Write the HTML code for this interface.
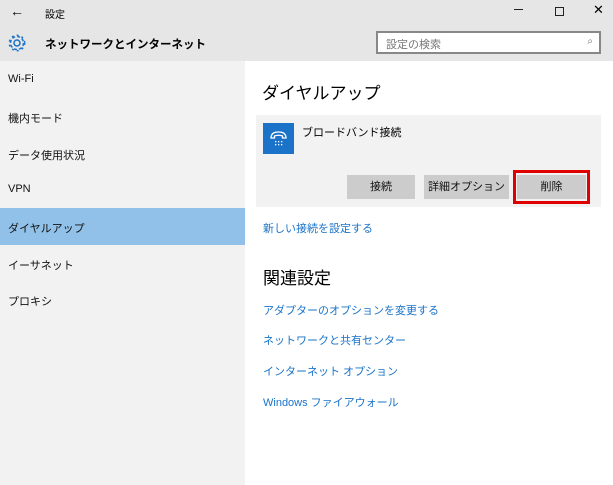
<!DOCTYPE html>
<html><head><meta charset="utf-8"><style>
*{margin:0;padding:0;box-sizing:border-box}
body{width:613px;height:485px;overflow:hidden;background:#fff;font-family:"Liberation Sans","Noto Sans CJK JP",sans-serif;color:#000;position:relative}
.a{position:absolute}
.top{left:0;top:0;width:613px;height:61px;background:#e6e6e6}
.nav{left:0;top:61px;width:245px;height:424px;background:#f2f2f2}
.ni{position:absolute;left:8px;font-size:11px;color:#111}
.sel{left:0;top:208px;width:245px;height:37px;background:#91c1e8}
.lnk{position:absolute;left:263px;font-size:11px;color:#1a73c9}
.btn{position:absolute;top:175px;height:24px;background:#cccccc;font-size:11px;text-align:center;line-height:24px;color:#111}
</style></head><body>
<div class="a top"></div>
<div class="a" style="left:10px;top:3px;font-size:14px">←</div>
<div class="a" style="left:45px;top:6px;font-size:10px">設定</div>
<div class="a" style="left:514px;top:9px;width:9px;height:1px;background:#222"></div>
<div class="a" style="left:555px;top:7px;width:9px;height:9px;border:1px solid #222"></div>
<div class="a" style="left:593px;top:2px;font-size:13px">✕</div>
<svg class="a" style="left:7px;top:33px" width="20" height="20" viewBox="0 0 20 20"><circle cx="10" cy="10" r="3" fill="none" stroke="#1a73c9" stroke-width="1.5"/><circle cx="10" cy="10" r="6.5" fill="none" stroke="#1a73c9" stroke-width="1.5" stroke-dasharray="3 2.1"/><circle cx="10" cy="10" r="7.7" fill="none" stroke="#1a73c9" stroke-width="1.5" stroke-dasharray="2 3.1"/></svg>
<div class="a" style="left:45px;top:36px;font-size:11.5px;font-weight:bold">ネットワークとインターネット</div>
<div class="a" style="left:376px;top:31px;width:225px;height:23px;border:2px solid #888;background:#fff;font-size:11px;color:#777;padding:3px 0 0 8px">設定の検索<span style="position:absolute;right:6px;top:3px;font-size:10px">⌕</span></div>
<div class="a nav"></div>
<div class="a sel"></div>
<div class="ni" style="top:73px">Wi-Fi</div>
<div class="ni" style="top:110px">機内モード</div>
<div class="ni" style="top:147px">データ使用状況</div>
<div class="ni" style="top:183px">VPN</div>
<div class="ni" style="top:220px">ダイヤルアップ</div>
<div class="ni" style="top:257px">イーサネット</div>
<div class="ni" style="top:293px">プロキシ</div>
<div class="a" style="left:262px;top:79px;font-size:17px">ダイヤルアップ</div>
<div class="a" style="left:256px;top:115px;width:345px;height:92px;background:#f2f2f2"></div>
<div class="a" style="left:263px;top:123px;width:31px;height:31px;background:#1a73c9"></div>
<svg class="a" style="left:263px;top:123px" width="31" height="31" viewBox="0 0 31 31"><path d="M8 15 Q8 9 15.5 9 Q23 9 23 15 L19.5 15 L19.5 13 Q15.5 11.5 11.5 13 L11.5 15 Z" fill="none" stroke="#fff" stroke-width="1.3"/><g fill="#fff"><rect x="12" y="18" width="1.3" height="1.3"/><rect x="15" y="18" width="1.3" height="1.3"/><rect x="18" y="18" width="1.3" height="1.3"/><rect x="12" y="21" width="1.3" height="1.3"/><rect x="15" y="21" width="1.3" height="1.3"/><rect x="18" y="21" width="1.3" height="1.3"/></g></svg>
<div class="a" style="left:302px;top:124px;font-size:11px">ブロードバンド接続</div>
<div class="btn" style="left:347px;width:68px">接続</div>
<div class="btn" style="left:424px;width:85px">詳細オプション</div>
<div class="a" style="left:513px;top:170px;width:77px;height:34px;border:3px solid #e00000"></div>
<div class="btn" style="left:517px;width:69px">削除</div>
<div class="lnk" style="top:220px">新しい接続を設定する</div>
<div class="a" style="left:263px;top:264px;font-size:17px">関連設定</div>
<div class="lnk" style="top:302px">アダプターのオプションを変更する</div>
<div class="lnk" style="top:332px">ネットワークと共有センター</div>
<div class="lnk" style="top:363px">インターネット オプション</div>
<div class="lnk" style="top:394px">Windows ファイアウォール</div>
</body></html>
